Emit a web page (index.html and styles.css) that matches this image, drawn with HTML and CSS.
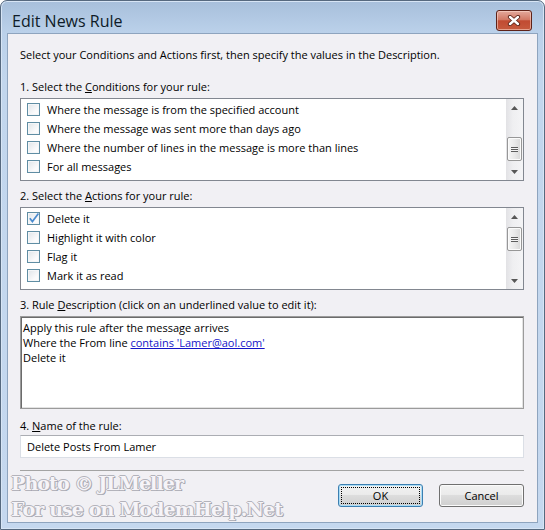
FILE: index.html
```html
<!DOCTYPE html>
<html lang="en">
<head>
  <meta charset="utf-8">
  <title>Edit News Rule</title>
  <link rel="stylesheet" href="styles.css">
</head>
<body>
  <div class="dialog">
    <div class="title-bar">
      <span class="title-text">Edit News Rule</span>
      <button class="btn-close" title="Close">
        <svg width="14" height="11" viewBox="0 0 14 11">
          <path d="M3 2 L11 9 M11 2 L3 9" stroke="#5b2318" stroke-width="4.2" stroke-linecap="round"/>
          <path d="M3 2 L11 9 M11 2 L3 9" stroke="#ffffff" stroke-width="2.4" stroke-linecap="round"/>
        </svg>
      </button>
    </div>

    <div class="client">
      <p class="intro">Select your Conditions and Actions first, then specify the values in the Description.</p>

      <div class="section section-first">
        <div class="section-label">1. Select the <u>C</u>onditions for your rule:</div>
        <div class="list-box">
          <ul class="items">
            <li><span class="check"></span>Where the message is from the specified account</li>
            <li><span class="check"></span>Where the message was sent more than days ago</li>
            <li><span class="check"></span>Where the number of lines in the message is more than lines</li>
            <li><span class="check"></span>For all messages</li>
          </ul>
          <div class="scrollbar">
            <span class="scroll-arrow"><svg width="7" height="4"><polygon points="0,4 3.5,0 7,4" fill="#575757"/></svg></span>
            <span class="scroll-thumb thumb-low"><span class="scroll-grip"></span></span>
            <span class="scroll-arrow"><svg width="7" height="4"><polygon points="0,0 3.5,4 7,0" fill="#575757"/></svg></span>
          </div>
        </div>
      </div>

      <div class="section">
        <div class="section-label">2. Select the <u>A</u>ctions for your rule:</div>
        <div class="list-box">
          <ul class="items">
            <li><span class="check checked"><svg width="13" height="13" viewBox="0 0 13 13"><polyline points="2.8,6.2 5.4,9.6 11.4,1.6" fill="none" stroke="#4a8bcf" stroke-width="1.7"/></svg></span>Delete it</li>
            <li><span class="check"></span>Highlight it with color</li>
            <li><span class="check"></span>Flag it</li>
            <li><span class="check"></span>Mark it as read</li>
          </ul>
          <div class="scrollbar">
            <span class="scroll-arrow"><svg width="7" height="4"><polygon points="0,4 3.5,0 7,4" fill="#575757"/></svg></span>
            <span class="scroll-thumb thumb-high"><span class="scroll-grip"></span></span>
            <span class="scroll-arrow"><svg width="7" height="4"><polygon points="0,0 3.5,4 7,0" fill="#575757"/></svg></span>
          </div>
        </div>
      </div>

      <div class="section">
        <div class="section-label">3. Rule <u>D</u>escription (click on an underlined value to edit it):</div>
        <div class="description">
          <div>Apply this rule after the message arrives</div>
          <div>Where the From line <a href="#" class="rule-link">contains 'Lamer@aol.com'</a></div>
          <div>Delete it</div>
        </div>
      </div>

      <div class="section section-name">
        <div class="section-label">4. <u>N</u>ame of the rule:</div>
        <input type="text" class="rule-name" value="Delete Posts From Lamer">
      </div>

      <div class="separator"></div>

      <div class="buttons">
        <button class="btn btn-default">OK</button>
        <button class="btn">Cancel</button>
      </div>

      <div class="watermark">
        <div>Photo © JLMeller</div>
        <div>For use on ModemHelp.Net</div>
      </div>
    </div>
  </div>
</body>
</html>
```

FILE: styles.css
```css
* {
  box-sizing: border-box;
}

body {
  margin: 0;
  font-family: "Open Sans", "Noto Sans", sans-serif;
  font-size: 11px;
  color: #000;
}

.dialog {
  height: 530px;
  display: flex;
  flex-direction: column;
  padding: 0 6px 6px;
  border: 1px solid #56697f;
  border-radius: 7px 7px 0 0;
  background: linear-gradient(#a7bfdb, #bbd1ea 32px, #c2d6ed 80px, #c5d8ef);
  box-shadow: inset 0 0 0 1px #d7e5f5;
}

.title-bar {
  height: 32px;
  display: flex;
  justify-content: space-between;
  align-items: flex-start;
  padding-left: 5px;
}

.title-text {
  margin-top: 9px;
  font-size: 16px;
  line-height: 22px;
  color: #0e1b28;
}

.btn-close {
  margin: 9px 6px 0 0;
  width: 36px;
  height: 21px;
  padding: 0;
  display: flex;
  align-items: center;
  justify-content: center;
  border: 1px solid #5e2218;
  border-radius: 3px;
  background: linear-gradient(#e3a99c 0%, #d27a66 45%, #c14b32 52%, #c65a3e 100%);
  box-shadow: inset 0 0 0 1px rgba(255, 220, 210, 0.55);
}

.client {
  position: relative;
  flex: 1;
  display: flex;
  flex-direction: column;
  padding: 13px 13px 0 12px;
  border: 1px solid #8ea4be;
  background: #f1f0f4;
}

.intro {
  margin: 0;
  line-height: 15px;
}

.section {
  margin-top: 7px;
}

.section-first {
  margin-top: 17px;
}

.section-name {
  margin-top: 9px;
}

.section-label {
  line-height: 15px;
  margin-bottom: 4px;
}

.section-name .section-label {
  margin-bottom: 2px;
}

/* listas con casillas */
.list-box {
  display: flex;
  height: 83px;
  border: 1px solid #828790;
  background: #fff;
}

.items {
  flex: 1;
  list-style: none;
  margin: 0;
  padding: 1px 0 0 6px;
}

.items li {
  height: 19px;
  display: flex;
  align-items: center;
  gap: 7px;
}

.check {
  width: 13px;
  height: 13px;
  border: 1px solid #5f8da3;
  background: linear-gradient(135deg, #dfe4e8, #fbfbfc 70%);
  box-shadow: inset 0 0 0 1px #f4f6f8;
  position: relative;
}

.check svg {
  position: absolute;
  left: -1px;
  top: -1px;
}

.scrollbar {
  width: 17px;
  display: flex;
  flex-direction: column;
  align-items: center;
  background: linear-gradient(to right, #e2e2e5, #efeff1 40%, #f4f4f6);
}

.scroll-arrow {
  width: 17px;
  height: 17px;
  display: flex;
  align-items: center;
  justify-content: center;
}

.scroll-thumb {
  width: 15px;
  height: 24px;
  display: flex;
  align-items: center;
  justify-content: center;
  border: 1px solid #979797;
  border-radius: 2px;
  background: linear-gradient(to right, #f6f6f6, #e9e9e9 50%, #d8d8d8);
  box-shadow: inset 0 0 0 1px #fbfbfb;
}

.scroll-grip {
  width: 7px;
  height: 5px;
  background: repeating-linear-gradient(#5c5c5c 0 1px, #f4f4f4 1px 2px);
}

.thumb-low {
  margin-top: auto;
  margin-bottom: 2px;
}

.thumb-high {
  margin-top: 2px;
  margin-bottom: auto;
}

.description {
  height: 93px;
  padding: 3px 2px;
  line-height: 15px;
  border: 1px solid #9b9b9b;
  background: #fff;
  box-shadow: inset 1px 1px 0 #6b6b6b, inset -1px -1px 0 #e3e3e3;
}

.rule-link {
  color: #1414c8;
  text-decoration: underline;
}

.rule-name {
  display: block;
  width: 100%;
  height: 23px;
  margin: 0;
  padding: 0 6px;
  font: inherit;
  color: #000;
  border: 1px solid #dbdfe6;
  border-top-color: #abadb3;
  background: #fff;
}

.separator {
  margin-top: 12px;
  height: 1px;
  background: #a3a3a3;
}

.buttons {
  margin-top: 13px;
  display: flex;
  justify-content: flex-end;
  gap: 16px;
}

.btn {
  width: 85px;
  height: 23px;
  padding: 0;
  font: inherit;
  color: #000;
  border: 1px solid #707070;
  border-radius: 3px;
  background: linear-gradient(#f2f2f2 0%, #ebebeb 45%, #dddddd 50%, #cfcfcf 100%);
  box-shadow: inset 0 0 0 1px #fbfbfb;
}

.btn-default {
  border-color: #3c7fb1;
  box-shadow: inset 0 0 0 1px #a9dcf6;
  outline: 1px dotted #000;
  outline-offset: -4px;
}

.watermark {
  position: absolute;
  left: 3px;
  top: 436px;
  font-family: "DejaVu Serif", "Liberation Serif", serif;
  font-weight: bold;
  font-size: 19px;
  line-height: 26px;
  letter-spacing: -0.9px;
  color: #f6f4f8;
  text-shadow: -1px 0 #b3b3bb, 1px 0 #b3b3bb, 0 -1px #b3b3bb, 0 1px #b3b3bb, 1px 1px #9c9ca6;
  pointer-events: none;
}
```
